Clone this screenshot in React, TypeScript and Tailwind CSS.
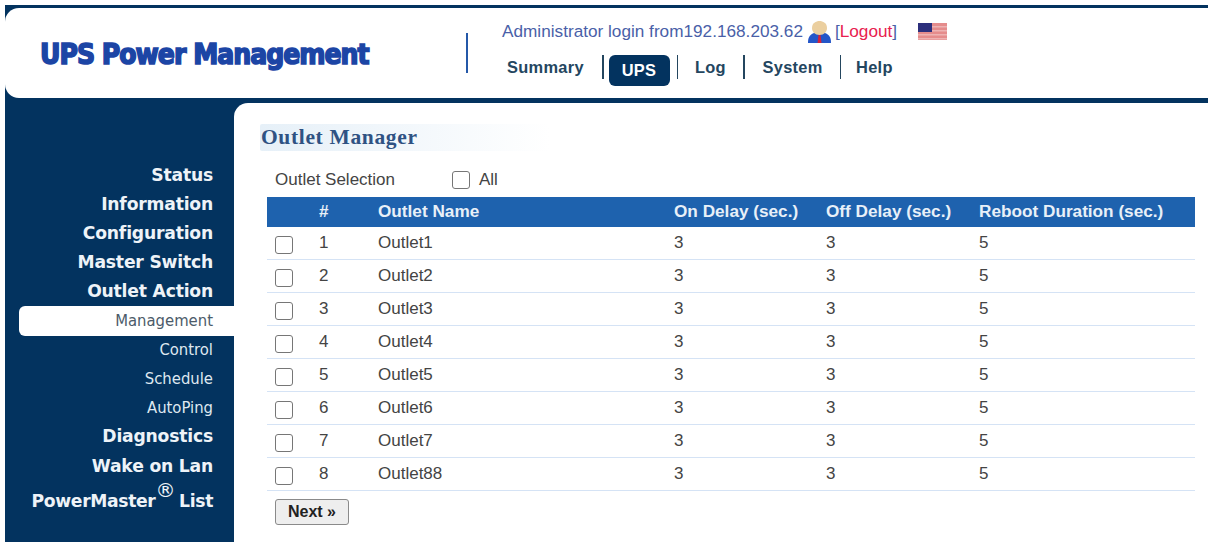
const sideItems = [
  { label: 'Status', bold: true },
  { label: 'Information', bold: true },
  { label: 'Configuration', bold: true },
  { label: 'Master Switch', bold: true },
  { label: 'Outlet Action', bold: true },
  { label: 'Management', bold: false, active: true },
  { label: 'Control', bold: false },
  { label: 'Schedule', bold: false },
  { label: 'AutoPing', bold: false },
  { label: 'Diagnostics', bold: true },
  { label: 'Wake on Lan', bold: true },
]

const outlets = ['Outlet1', 'Outlet2', 'Outlet3', 'Outlet4', 'Outlet5', 'Outlet6', 'Outlet7', 'Outlet88']

function NavSep({ className = '' }: { className?: string }) {
  return <div className={`w-[1.5px] h-6 shrink-0 bg-[#24465f] ${className}`} />
}

function Check({ className = '' }: { className?: string }) {
  return <span className={`block w-[18px] h-[18px] rounded-[3px] border-[1.5px] border-[#767676] bg-white ${className}`} />
}

function UserIcon() {
  return (
    <svg width="23" height="22" viewBox="0 0 23 22">
      <path d="M0 22c0-5 1-8 6-10h11c5 2 6 5 6 10z" fill="#2456c8" />
      <path d="M4 7C4 2 8 0 11.500 0S19 2 19 7c0 4-3 7-7.500 7S4 11 4 7z" fill="#ebcf9f" />
      <path d="M10.500 14h2l1 8h-4z" fill="#d6213a" />
    </svg>
  )
}

function Flag() {
  return (
    <svg width="29" height="17" viewBox="0 0 29 17">
      <rect width="29" height="17" fill="#e58c8c" />
      <rect y="3" width="29" height="1.500" fill="#eeb3b3" />
      <rect y="7" width="29" height="1.500" fill="#eeb3b3" />
      <rect y="11" width="29" height="1.500" fill="#eeb3b3" />
      <rect y="15" width="29" height="1.500" fill="#eeb3b3" />
      <rect width="14" height="9" fill="#2c2f7c" />
    </svg>
  )
}

export default function App() {
  return (
    <div className="w-[1215px] h-[546px] bg-white overflow-hidden pt-[5px] pl-[5px] pr-[7px] font-['Liberation_Sans',Arial,sans-serif]">
      <div className="h-[537px] flex flex-col bg-[#03335f]">
        <header className="mt-[3px] h-[90px] bg-white rounded-l-[14px] flex shrink-0">
          <div className="w-[461px] pl-[35px] pt-[29px]">
            <h1 className="text-[28px] leading-[36px] font-bold text-[#1c45a5] whitespace-nowrap [-webkit-text-stroke:1.5px_#1c45a5] font-['DejaVu_Sans_Condensed','DejaVu_Sans',sans-serif] tracking-[-1px]">
              UPS Power Management
            </h1>
          </div>
          <div className="w-[2px] h-10 mt-[25px] bg-[#2458a8]" />
          <div className="flex-1 pl-[34px] pt-[10px]">
            <div className="flex items-center h-[27px] text-[17.200px] text-[#4a5fa8] whitespace-nowrap">
              <span>Administrator login from192.168.203.62</span>
              <span className="ml-[5px]"><UserIcon /></span>
              <span className="ml-[4px]">[<span className="text-[#e8204f]">Logout</span>]</span>
              <span className="ml-[21px] mb-[1px]"><Flag /></span>
            </div>
            <nav className="flex items-center mt-[6px] h-[32px] text-[16.400px] font-bold text-[#24465f] tracking-[0.3px]">
              <span className="ml-[5px] w-[95px]">Summary</span>
              <NavSep />
              <span className="ml-[5px] w-[61px] h-[31px] mt-[7px] rounded-[6px] bg-[#03335f] text-white flex items-center justify-center">UPS</span>
              <NavSep className="ml-[7px]" />
              <span className="ml-[17px] w-[48px]">Log</span>
              <NavSep />
              <span className="ml-[18px] w-[77px]">System</span>
              <NavSep />
              <span className="ml-[15px]">Help</span>
            </nav>
          </div>
        </header>
        <div className="flex flex-1 mt-[5px] min-h-0">
          <aside className="w-[229px] shrink-0 pt-[58px] font-['DejaVu_Sans',sans-serif]">
            {sideItems.map((item) => (
              <div
                key={item.label}
                className={`h-[29.1px] flex items-center justify-end pr-[21px] ${
                  item.bold
                    ? 'text-[17.200px] font-bold text-[#eef3f8] tracking-[-0.2px]'
                    : item.active
                      ? "ml-[14px] rounded-l-[6px] bg-white text-[16.500px] text-[#4c5b69] font-['DejaVu_Sans_Condensed']"
                      : "text-[16.500px] text-[#dfe8f0] font-['DejaVu_Sans_Condensed']"
                }`}
              >
                {item.label}
              </div>
            ))}
            <div className="h-[42px] flex items-center justify-end pr-[21px] text-[17.200px] font-bold text-[#eef3f8] tracking-[-0.35px]">
              PowerMaster<sup className="text-[20px] font-normal -mt-1 mr-[4px]">®</sup>List
            </div>
          </aside>
          <main className="flex-1 bg-white rounded-tl-[14px] pt-[21px] pl-[26px] pr-[13px] text-[17px] text-[#444] relative">
            <h2 className="w-[290px] h-[27px] pl-[1px] flex items-center rounded-[2px] bg-linear-to-r from-[#e6f0f8] to-white text-[21.500px] font-bold text-[#2f5283] tracking-[0.65px] font-['Liberation_Serif',serif]">
              Outlet Manager
            </h2>
            <div className="flex items-center h-[30px] mt-[14px] pl-[15px]">
              <span className="w-[177px]">Outlet Selection</span>
              <Check />
              <span className="ml-[9px]">All</span>
            </div>
            <div className="ml-[7px]">
              <div className="flex items-center h-[30px] mt-[2px] bg-[#1e62ae] text-[#e8f0f8] font-bold text-[17.200px]">
                <span className="w-[52px]" />
                <span className="w-[59px]">#</span>
                <span className="w-[296px]">Outlet Name</span>
                <span className="w-[152px]">On Delay (sec.)</span>
                <span className="w-[153px]">Off Delay (sec.)</span>
                <span>Reboot Duration (sec.)</span>
              </div>
              {outlets.map((name, i) => (
                <div key={name} className="flex h-[33px] border-b-[1.5px] border-[#d5e3f5] leading-[24px]">
                  <span className="w-[52px] pl-2 pt-[9px]"><Check /></span>
                  <span className="w-[59px] pt-[4px]">{i + 1}</span>
                  <span className="w-[296px] pt-[4px]">{name}</span>
                  <span className="w-[152px] pt-[4px]">3</span>
                  <span className="w-[153px] pt-[4px]">3</span>
                  <span className="pt-[4px]">5</span>
                </div>
              ))}
              <button className="ml-2 mt-[8px] w-[74px] h-[26px] rounded-[3px] border-[1.5px] border-[#8a8a8a] bg-[#eeeeee] text-[#222] font-bold text-[16px]">
                Next »
              </button>
            </div>
          </main>
        </div>
      </div>
    </div>
  )
}
